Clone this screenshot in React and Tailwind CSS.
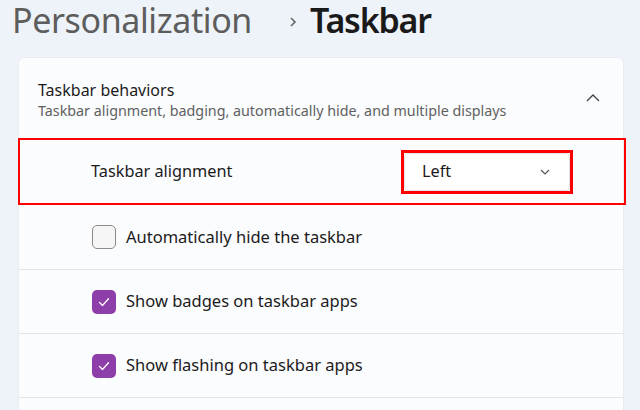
import React from "react";

const font = { fontFamily: '"Noto Sans", "Open Sans", sans-serif' };

const Check = ({ checked }) =>
  checked ? (
    <div className="w-6 h-6 rounded-[5px] bg-[#8e3ea8] flex items-center justify-center">
      <svg width="14" height="14" viewBox="0 0 14 14" fill="none">
        <path d="M2.5 7.5 L5.6 10.4 L11.5 3.8" stroke="white" strokeWidth="1.4" strokeLinecap="round" strokeLinejoin="round" />
      </svg>
    </div>
  ) : (
    <div className="w-6 h-6 rounded-[5px] border border-[#8a8a8a] bg-[#f6f6f6]"></div>
  );

const CheckRow = ({ label, checked }) => (
  <div className="h-16 border-t border-[#e5e5e5] flex items-center pl-[73px] gap-[10px]">
    <Check checked={checked} />
    <span className="text-[16.5px] text-[#1b1b1b]">{label}</span>
  </div>
);

const App = () => {
  return (
    <div className="w-[640px] h-[410px] overflow-hidden bg-[#eef3f9]" style={font}>
      <div className="h-[57px] pl-[12px] pt-[2px] flex items-start">
        <span className="text-[34px] leading-[36px] text-[#5d5d5d] tracking-[-0.4px]">Personalization</span>
        <svg className="ml-[36px] mt-[14px]" width="10" height="12" viewBox="0 0 10 12">
          <path d="M3 2 L7 6 L3 10" stroke="#666" strokeWidth="1.6" fill="none" />
        </svg>
        <span className="ml-[12px] text-[34px] leading-[36px] font-semibold text-[#1a1a1a] tracking-[-1.2px]">Taskbar</span>
      </div>
      <div className="ml-[18px] w-[606px] bg-[#fbfcfe] rounded-t-[6px] border border-[#e8ebef] border-b-0">
        <div className="h-[80px] pl-[19px] pr-[22px] flex items-center justify-between">
          <div className="flex flex-col pt-[3px]">
            <span className="text-[16px] text-[#1b1b1b] leading-[21px]">Taskbar behaviors</span>
            <span className="text-[14.3px] text-[#606060] leading-[19px]">
              Taskbar alignment, badging, automatically hide, and multiple displays
            </span>
          </div>
          <svg width="16" height="10" viewBox="0 0 16 10">
            <path d="M2 8 L8 2 L14 8" stroke="#444" strokeWidth="1.3" fill="none" />
          </svg>
        </div>
        <div className="h-[67px] -ml-[1px] -mr-[3px] border-[2px] border-[#ff0000] flex items-center pl-[71px]">
          <span className="text-[16.3px] text-[#1b1b1b] w-[310px]">Taskbar alignment</span>
          <div className="w-[172px] h-[44px] border-[3px] border-[#ff0000] flex">
            <div className="flex-1 bg-white border border-[#e3e3e3] rounded-[4px] flex items-center justify-between pl-[17px] pr-[18px]">
              <span className="text-[16.3px] text-[#1b1b1b]">Left</span>
              <svg width="12" height="8" viewBox="0 0 12 8">
                <path d="M2 2 L6 6 L10 2" stroke="#555" strokeWidth="1.2" fill="none" />
              </svg>
            </div>
          </div>
        </div>
        <div className="h-16 flex items-center pl-[73px] gap-[10px]">
          <Check checked={false} />
          <span className="text-[16.5px] text-[#1b1b1b]">Automatically hide the taskbar</span>
        </div>
        <CheckRow label="Show badges on taskbar apps" checked />
        <CheckRow label="Show flashing on taskbar apps" checked />
        <div className="h-16 border-t border-[#e5e5e5]"></div>
      </div>
    </div>
  );
};

export default App;
